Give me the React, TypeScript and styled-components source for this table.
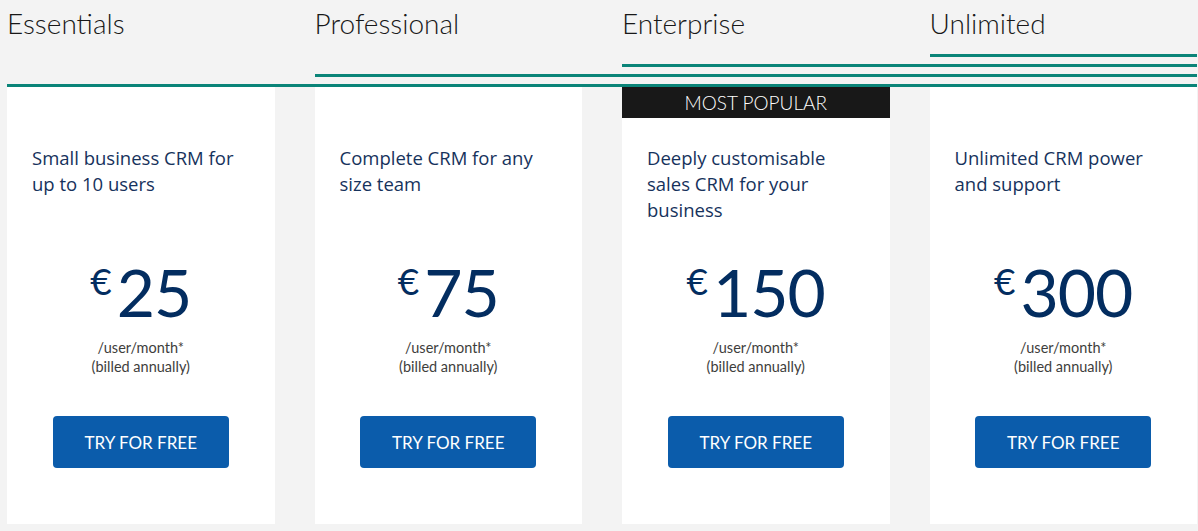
import styled, { createGlobalStyle } from "styled-components"

const GlobalStyle = createGlobalStyle`
  html, body {
    margin: 0;
    padding: 0;
    background: #f3f3f3;
    overflow: hidden;
  }
  * { box-sizing: border-box; }
`

const Page = styled.main`
  display: grid;
  grid-template-columns: repeat(4, 1fr);
  column-gap: 40px;
  padding: 0 1px 0 7px;
  width: 1198px;
  height: 531px;
  font-family: Lato, "Liberation Sans", sans-serif;
`

const Column = styled.section`
  display: flex;
  flex-direction: column;
  min-width: 0;
`

const Header = styled.header`
  height: 87px;
  display: flex;
  flex-direction: column;
`

const Title = styled.h2`
  margin: 5px 0 0;
  font-size: 28px;
  font-weight: 300;
  line-height: 36px;
  color: #181818;
  white-space: nowrap;
`

// line runs from the column start to the right edge of the page
const Rule = styled.div<{ $after: number; $drop: number }>`
  margin-top: auto;
  margin-bottom: ${({ $drop }) => $drop}px;
  height: 3px;
  flex-shrink: 0;
  background: #0a8478;
  width: ${({ $after }) => `calc(${$after + 1} * 100% + ${$after * 40}px)`};
`

const Card = styled.div`
  background: #fff;
  height: 437px;
  display: flex;
  flex-direction: column;
  align-items: center;
`

const Badge = styled.div<{ $show: boolean }>`
  width: 100%;
  height: 31px;
  flex-shrink: 0;
  background: ${({ $show }) => ($show ? "#181818" : "transparent")};
  color: #fff;
  font-size: 19px;
  font-weight: 300;
  line-height: 31px;
  text-align: center;
  text-transform: uppercase;
`

const Desc = styled.p`
  align-self: stretch;
  margin: 27px 0 0;
  padding: 0 27px 0 25px;
  height: 78px;
  font-family: "Open Sans", Lato, sans-serif;
  font-size: 18.5px;
  line-height: 26px;
  color: #16325c;
`

const Price = styled.div`
  margin-top: 36px;
  display: flex;
  align-items: flex-start;
  color: #032d60;
`

const Currency = styled.span`
  font-size: 37px;
  line-height: 1;
  margin-top: 3px;
  margin-right: 5px;
`

const Amount = styled.span`
  font-size: 66px;
  line-height: 66px;
  letter-spacing: -1px;
`

const Note = styled.p`
  margin: 13px 0 0;
  font-size: 14.5px;
  line-height: 19px;
  color: #3e3e3c;
  text-align: center;
`

const TryButton = styled.button`
  margin-top: 40px;
  width: 176px;
  height: 52px;
  border: none;
  border-radius: 4px;
  background: #0b5cab;
  color: #fff;
  font-family: inherit;
  font-size: 17px;
  cursor: pointer;
`

const plans = [
  { name: "Essentials", desc: "Small business CRM for up to 10 users", price: "25" },
  { name: "Professional", desc: "Complete CRM for any size team", price: "75" },
  { name: "Enterprise", desc: "Deeply customisable sales CRM for your business", price: "150", popular: true },
  { name: "Unlimited", desc: "Unlimited CRM power and support", price: "300" },
]

export default function App() {
  return (
    <>
      <GlobalStyle />
      <Page>
        {plans.map((p, i) => (
          <Column key={p.name}>
            <Header>
              <Title>{p.name}</Title>
              <Rule $after={3 - i} $drop={i * 10} />
            </Header>
            <Card>
              <Badge $show={!!p.popular}>{p.popular ? "Most popular" : ""}</Badge>
              <Desc>{p.desc}</Desc>
              <Price>
                <Currency>€</Currency>
                <Amount>{p.price}</Amount>
              </Price>
              <Note>
                /user/month*
                <br />
                (billed annually)
              </Note>
              <TryButton>TRY FOR FREE</TryButton>
            </Card>
          </Column>
        ))}
      </Page>
    </>
  )
}
